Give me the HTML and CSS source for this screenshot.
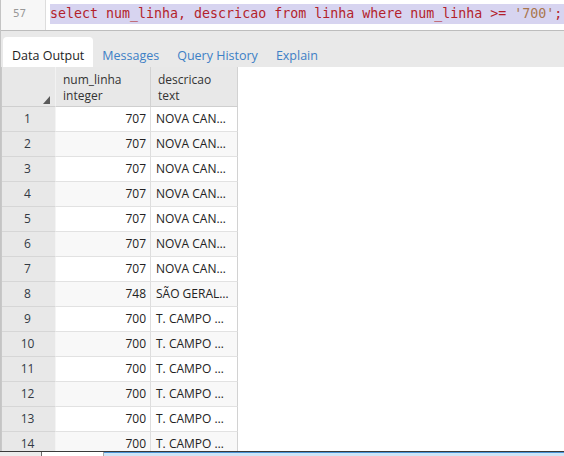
FILE: index.html
```html
<!DOCTYPE html>
<html lang="pt">
<head>
<meta charset="utf-8">
<title>Query</title>
<link rel="stylesheet" href="styles.css">
</head>
<body>
<div class="app">
  <div class="editor">
    <div class="gutter">57</div>
    <div class="code"><div class="line">select num_linha, descricao from linha where num_linha &gt;= <span class="str">'700'</span>;</div></div>
  </div>
  <div class="tabs">
    <div class="tab active">Data Output</div>
    <div class="tab">Messages</div>
    <div class="tab">Query History</div>
    <div class="tab">Explain</div>
  </div>
  <div class="grid-wrap">
    <div class="grid">
      <div class="hcell rn">
        <svg class="resize" width="7" height="8" viewBox="0 0 7 8"><polygon points="7,0 7,8 0,8" fill="#5a5a5a"/></svg>
      </div>
      <div class="hcell"><span>num_linha</span><span>integer</span></div>
      <div class="hcell"><span>descricao</span><span>text</span></div>

      <div class="cell rn">1</div><div class="cell num">707</div><div class="cell txt">NOVA CANAÃ</div>
      <div class="cell rn">2</div><div class="cell num alt">707</div><div class="cell txt alt">NOVA CANAÃ</div>
      <div class="cell rn">3</div><div class="cell num">707</div><div class="cell txt">NOVA CANAÃ</div>
      <div class="cell rn">4</div><div class="cell num alt">707</div><div class="cell txt alt">NOVA CANAÃ</div>
      <div class="cell rn">5</div><div class="cell num">707</div><div class="cell txt">NOVA CANAÃ</div>
      <div class="cell rn">6</div><div class="cell num alt">707</div><div class="cell txt alt">NOVA CANAÃ</div>
      <div class="cell rn">7</div><div class="cell num">707</div><div class="cell txt">NOVA CANAÃ</div>
      <div class="cell rn">8</div><div class="cell num alt">748</div><div class="cell txt alt">SÃO GERALDO</div>
      <div class="cell rn">9</div><div class="cell num">700</div><div class="cell txt">T. CAMPO GRANDE</div>
      <div class="cell rn">10</div><div class="cell num alt">700</div><div class="cell txt alt">T. CAMPO GRANDE</div>
      <div class="cell rn">11</div><div class="cell num">700</div><div class="cell txt">T. CAMPO GRANDE</div>
      <div class="cell rn">12</div><div class="cell num alt">700</div><div class="cell txt alt">T. CAMPO GRANDE</div>
      <div class="cell rn">13</div><div class="cell num">700</div><div class="cell txt">T. CAMPO GRANDE</div>
      <div class="cell rn">14</div><div class="cell num alt">700</div><div class="cell txt alt">T. CAMPO GRANDE</div>
    </div>
  </div>
  <div class="bottom">
    <div class="seg s1"></div>
    <div class="seg s2"></div>
    <div class="seg s3"></div>
  </div>
</div>
</body>
</html>
```

FILE: styles.css
```css
html, body {
  margin: 0;
  padding: 0;
  background: #ffffff;
}

body {
  width: 564px;
  height: 456px;
  overflow: hidden;
  font-family: "Open Sans", "Liberation Sans", sans-serif;
  color: #222222;
}

.app {
  height: 456px;
  display: flex;
  flex-direction: column;
  border-left: 1px solid #c4c4c4;
  box-sizing: border-box;
}

/* editor */
.editor {
  height: 31px;
  flex: none;
  display: flex;
  border-bottom: 1px solid #bdbdbd;
  box-sizing: border-box;
  background: #ffffff;
}

.gutter {
  width: 45px;
  flex: none;
  box-sizing: border-box;
  border-right: 1px solid #dddddd;
  background: #f7f7f7;
  padding-left: 12px;
  padding-top: 4px;
  line-height: 20px;
  font-family: "DejaVu Sans Mono", "Liberation Mono", monospace;
  font-size: 11px;
  color: #999999;
}

.code {
  flex: 1;
  min-width: 0;
  padding-top: 4px;
  padding-left: 4px;
  overflow: hidden;
}

.line {
  height: 20px;
  line-height: 20px;
  background: #d7d4f0;
  white-space: pre;
  font-family: "DejaVu Sans Mono", "Liberation Mono", monospace;
  font-size: 13.3px;
  color: #b31f2b;
}

.str {
  color: #a9764c;
}

/* tabs */
.tabs {
  height: 36px;
  flex: none;
  display: flex;
  align-items: flex-end;
  padding-left: 2px;
  background: #e9e9e9;
}

.tab {
  height: 30px;
  box-sizing: border-box;
  padding: 8px 9px 0;
  line-height: 22px;
  font-size: 12.5px;
  color: #3d80c6;
  white-space: nowrap;
}

.tab.active {
  background: #ffffff;
  color: #1e1e1e;
  border-radius: 4px 4px 0 0;
}

/* grid */
.grid-wrap {
  flex: 1;
  min-height: 0;
  overflow: hidden;
}

.grid {
  display: grid;
  grid-template-columns: 54px 95px 87px;
  grid-template-rows: 40px;
  grid-auto-rows: 25px;
  width: max-content;
  border-left: 1px solid #c8c8c8;
  font-size: 12px;
}

.hcell {
  box-sizing: border-box;
  background: #e8e8e8;
  border-right: 1px solid #d2d2d2;
  border-bottom: 1px solid #cfcfcf;
  padding: 5px 0 0 7px;
  display: flex;
  flex-direction: column;
  line-height: 16px;
  color: #333333;
}

.hcell.rn {
  padding: 0 5px 2px 0;
  align-items: flex-end;
  justify-content: flex-end;
  border-right-color: #f2f2f2;
}

.cell {
  box-sizing: border-box;
  border-right: 1px solid #dedede;
  border-bottom: 1px solid #e2e2e2;
  line-height: 24px;
  white-space: nowrap;
  overflow: hidden;
  text-overflow: ellipsis;
  color: #222222;
  background: #ffffff;
}

.cell.alt {
  background: #f8f8f8;
}

.cell.rn {
  background: #e8e8e8;
  text-align: center;
  color: #333a44;
  border-right-color: #f4f4f4;
  border-bottom-color: #d6d6d6;
  padding-right: 2px;
}

.cell.num {
  text-align: right;
  padding-right: 4px;
}

.cell.txt {
  padding-left: 5px;
  padding-right: 6px;
  border-right-color: #d2d2d2;
}

/* bottom strip */
.bottom {
  height: 5px;
  flex: none;
  box-sizing: border-box;
  border-top: 1px solid #3a3a3a;
  display: flex;
  margin-left: -1px;
}

.seg {
  height: 4px;
}

.s1 {
  width: 41px;
  background: #ececec;
  border-right: 1px solid #6b6b6b;
}

.s2 {
  width: 61px;
  background: #ffffff;
  border-right: 1px solid #a9a9a9;
}

.s3 {
  flex: 1;
  background: #cfe5f6;
  border-top: 1px solid #4a93d6;
  box-sizing: border-box;
}
```
